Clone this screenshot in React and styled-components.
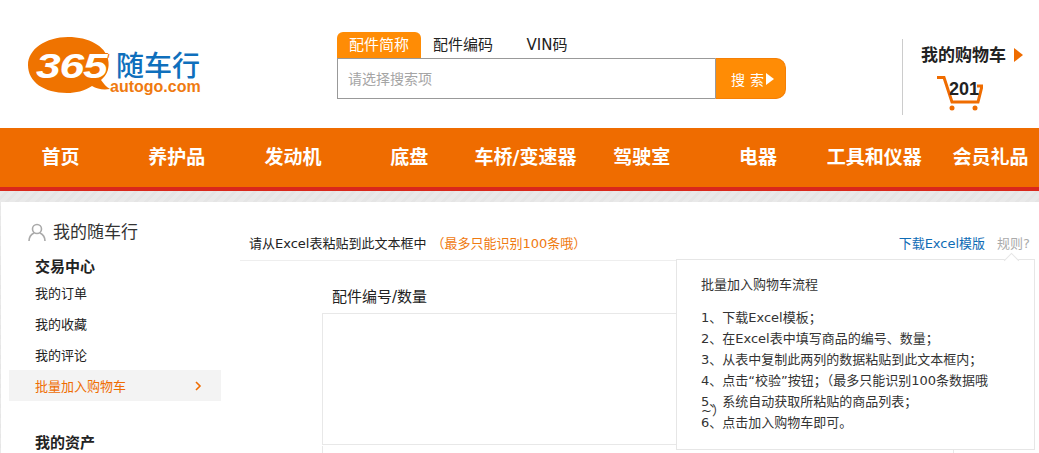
import React from 'react'
import styled, { createGlobalStyle } from 'styled-components'

const Global = createGlobalStyle`
html, body { margin: 0; padding: 0; background: #fff; }
body { width: 1039px; height: 453px; overflow: hidden; font-family: "DejaVu Sans", "Noto Sans CJK SC", sans-serif; color: #222; }
* { box-sizing: border-box; }
`

const Page = styled.div`
width: 1039px;
height: 453px;
overflow: hidden;
display: flex;
flex-direction: column;
`

const Header = styled.header`
height: 128px;
flex: none;
display: flex;
align-items: flex-start;
`

const Logo = styled.div`
position: relative;
width: 175px;
height: 60px;
margin: 37px 0 0 27px;
flex: none;
`

const Bubble = styled.svg`
position: absolute;
left: 0;
top: 0;
`

const LogoNum = styled.span`
position: absolute;
left: 9px;
top: 9px;
font: italic 700 35px/40px "Liberation Sans", sans-serif;
letter-spacing: -1px;
color: #fff;
transform: scaleX(1.27);
transform-origin: left center;
text-shadow: 1px 0 0 #ef7300, -1px 0 0 #ef7300, 0 1px 0 #ef7300, 0 -1px 0 #ef7300;
`

const LogoName = styled.span`
position: absolute;
left: 89px;
top: 10px;
font: 500 28px/34px "Noto Sans CJK SC", sans-serif;
color: #0f6fbc;
`

const LogoUrl = styled.span`
position: absolute;
left: 83px;
top: 41px;
font: 700 16px/18px "Liberation Sans", sans-serif;
color: #ef7a10;
`

const Search = styled.div`
width: 449px;
margin: 32px 0 0 135px;
flex: none;
`

const Tabs = styled.div`
display: flex;
height: 26px;
`

const Tab = styled.span`
width: 84px;
height: 26px;
font-size: 15px;
line-height: 27px;
text-align: center;
border-radius: 6px 6px 0 0;
color: ${p => (p.$on ? '#fff' : '#222')};
background: ${p => (p.$on ? '#ff8c05' : 'transparent')};
`

const SearchRow = styled.div`
display: flex;
height: 41px;
`

const Field = styled.div`
width: 378px;
height: 41px;
border: 1px solid #999;
border-right: 0;
padding-left: 10px;
font-size: 14px;
line-height: 40px;
color: #a5a5a5;
`

const SearchBtn = styled.div`
flex: 1;
display: flex;
align-items: center;
padding-left: 15px;
gap: 1px;
background: #ff8c05;
border: 1px solid #f57f05;
border-left: 1px solid #999;
border-radius: 0 10px 10px 0;
color: #fff;
font-size: 14px;
letter-spacing: 5px;
`

const BtnArrow = styled.i`
width: 0;
height: 0;
margin-left: -4px;
border-left: 8px solid #fff;
border-top: 6px solid transparent;
border-bottom: 6px solid transparent;
`

const Cart = styled.div`
width: 137px;
height: 76px;
margin: 39px 0 0 116px;
border-left: 1px solid #ccc;
padding: 4px 0 0 18px;
flex: none;
`

const CartTitle = styled.div`
display: flex;
align-items: center;
gap: 8px;
font-size: 17px;
font-weight: 700;
line-height: 24px;
color: #222;
`

const TitleArrow = styled.i`
width: 0;
height: 0;
border-left: 9px solid #ef6c00;
border-top: 7px solid transparent;
border-bottom: 7px solid transparent;
`

const CartIcon = styled.div`
position: relative;
width: 46px;
height: 36px;
margin: 9px 0 0 16px;
`

const CartCount = styled.span`
position: absolute;
left: 12px;
top: 4px;
font: 700 18px/18px "Liberation Sans", sans-serif;
color: #222;
`

const Nav = styled.nav`
height: 63px;
flex: none;
display: flex;
padding-left: 2.3px;
overflow: hidden;
background: #ef6c00;
border-bottom: 4px solid #d9281c;
`

const NavItem = styled.a`
width: 116.25px;
flex: none;
text-align: center;
font-size: 19px;
font-weight: 700;
line-height: 58px;
white-space: nowrap;
color: #fff;
`

const Body = styled.div`
flex: 1;
min-height: 0;
padding: 11px 0 0 1px;
background: repeating-linear-gradient(135deg, #e9e9e9 0 4px, #e5e5e5 4px 7px);
`

const Panel = styled.div`
height: 100%;
background: #fff;
display: flex;
`

const Side = styled.aside`
width: 239px;
flex: none;
padding-top: 18px;
`

const SideTitle = styled.div`
display: flex;
align-items: center;
gap: 7px;
height: 24px;
padding-left: 27px;
font-size: 17px;
line-height: 24px;
color: #333;
`

const SideGroup = styled.div`
padding-left: 34px;
font-size: 15px;
font-weight: 700;
line-height: 19px;
color: #222;
margin-top: ${p => p.$top}px;
`

const SideLink = styled.div`
width: 212px;
height: 31px;
margin-left: 8px;
padding: 0 19px 0 26px;
display: flex;
align-items: center;
justify-content: space-between;
font-size: 13px;
color: ${p => (p.$on ? '#ef6c00' : '#222')};
background: ${p => (p.$on ? '#f3f3f3' : 'transparent')};
`

const Main = styled.main`
position: relative;
flex: 1;
min-width: 0;
`

const TopBar = styled.div`
height: 59px;
margin-right: 4px;
padding: 23px 5px 0 9px;
display: flex;
align-items: center;
justify-content: space-between;
border-bottom: 1px solid #eee;
font-size: 13px;
color: #222;
`

const Note = styled.span`
color: #ef7a10;
margin-left: 5px;
`

const TopLinks = styled.div`
display: flex;
gap: 12px;
`

const Download = styled.span`
color: #0f6cb5;
`

const Rules = styled.span`
color: #aaa;
`

const FormLabel = styled.div`
margin: 24px 0 0 92px;
font-size: 15px;
line-height: 24px;
color: #222;
`

const TextBox = styled.div`
width: 632px;
height: 132px;
margin: 4px 0 0 82px;
border: 1px solid #e8e8e8;
`

const NextBox = styled.div`
width: 632px;
height: 20px;
margin: 1px 0 0 82px;
border: 1px solid #e8e8e8;
border-bottom: 0;
border-top: 0;
`

const Popup = styled.div`
position: absolute;
left: 436px;
top: 57px;
width: 359px;
height: 191px;
padding: 15px 24px 0;
background: #fff;
border: 1px solid #e6e6e6;
font-size: 13px;
color: #333;
&::before {
  content: "";
  position: absolute;
  right: 17px;
  top: -5px;
  width: 10px;
  height: 10px;
  background: #fff;
  border-left: 1px solid #e6e6e6;
  border-top: 1px solid #e6e6e6;
  transform: rotate(45deg);
}
`

const PopupTitle = styled.div`
line-height: 20px;
margin-bottom: 12px;
`

const Step = styled.div`
position: relative;
height: 21px;
line-height: 21px;
white-space: nowrap;
`

const Spill = styled.span`
position: absolute;
left: 0;
top: 34px;
line-height: 14px;
`

const navItems = ['首页', '养护品', '发动机', '底盘', '车桥/变速器', '驾驶室', '电器', '工具和仪器', '会员礼品']

export default function App() {
  return (
    <Page>
      <Global />
      <Header>
        <Logo>
          <Bubble width="92" height="60" viewBox="0 0 92 60">
            <path d="M41 0C62 0 78 9 81 22C83 31 80 38 74 43C77 47 79 50 83 52C76 53 70 52 65 49C57 54 49 56 40 56C17 56 1 45 1 28C1 12 19 0 41 0Z" fill="#ef7300" />
          </Bubble>
          <LogoNum>365</LogoNum>
          <LogoName>随车行</LogoName>
          <LogoUrl>autogo.com</LogoUrl>
        </Logo>
        <Search>
          <Tabs>
            <Tab $on>配件简称</Tab>
            <Tab>配件编码</Tab>
            <Tab>VIN码</Tab>
          </Tabs>
          <SearchRow>
            <Field>请选择搜索项</Field>
            <SearchBtn>搜索<BtnArrow /></SearchBtn>
          </SearchRow>
        </Search>
        <Cart>
          <CartTitle>我的购物车<TitleArrow /></CartTitle>
          <CartIcon>
            <svg width="46" height="36" viewBox="0 0 46 36" fill="none">
              <path d="M0 1.5H7L15 26H41L45 10H40" stroke="#ef6c00" strokeWidth="3" />
              <circle cx="15" cy="32" r="2.5" fill="#ef6c00" />
              <circle cx="38" cy="32" r="2.5" fill="#ef6c00" />
            </svg>
            <CartCount>201</CartCount>
          </CartIcon>
        </Cart>
      </Header>
      <Nav>
        {navItems.map(t => <NavItem key={t}>{t}</NavItem>)}
      </Nav>
      <Body>
        <Panel>
          <Side>
            <SideTitle>
              <svg width="18" height="18" viewBox="0 0 18 18" fill="none" stroke="#aaa" strokeWidth="1.6">
                <circle cx="9" cy="6" r="4.5" />
                <path d="M1 18C1 13 4 11 6 10M17 18C17 13 14 11 12 10" />
              </svg>
              我的随车行
            </SideTitle>
            <SideGroup $top={14}>交易中心</SideGroup>
            <SideLink>我的订单</SideLink>
            <SideLink>我的收藏</SideLink>
            <SideLink>我的评论</SideLink>
            <SideLink $on>批量加入购物车
              <svg width="8" height="12" viewBox="0 0 8 12" fill="none" stroke="#ef6c00" strokeWidth="1.6"><path d="M2 2L6 6L2 10" /></svg>
            </SideLink>
            <SideGroup $top={33}>我的资产</SideGroup>
          </Side>
          <Main>
            <TopBar>
              <span>请从Excel表粘贴到此文本框中<Note>（最多只能识别100条哦）</Note></span>
              <TopLinks><Download>下载Excel模版</Download><Rules>规则?</Rules></TopLinks>
            </TopBar>
            <FormLabel>配件编号/数量</FormLabel>
            <TextBox />
            <NextBox />
            <Popup>
              <PopupTitle>批量加入购物车流程</PopupTitle>
              <Step>1、下载Excel模板；</Step>
              <Step>2、在Excel表中填写商品的编号、数量；</Step>
              <Step>3、从表中复制此两列的数据粘贴到此文本框内；</Step>
              <Step>4、点击“校验”按钮；（最多只能识别100条数据哦<Spill>~）</Spill></Step>
              <Step>5、系统自动获取所粘贴的商品列表；</Step>
              <Step>6、点击加入购物车即可。</Step>
            </Popup>
          </Main>
        </Panel>
      </Body>
    </Page>
  )
}
